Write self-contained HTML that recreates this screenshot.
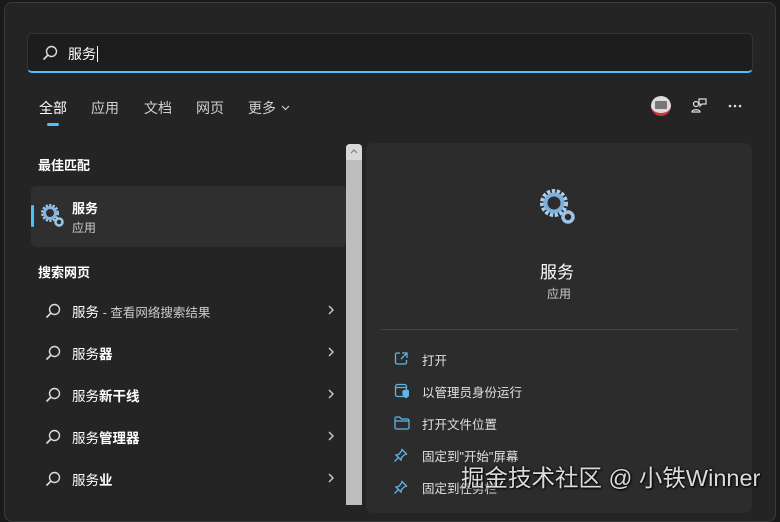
<!DOCTYPE html>
<html><head><meta charset="utf-8"><style>
*{margin:0;padding:0;box-sizing:border-box}
body{width:780px;height:505px;overflow:hidden;background:#1a1a1a;font-family:"Liberation Sans","Noto Sans CJK SC",sans-serif;color:#fff;position:relative}
.panel{position:absolute;left:4px;top:2px;width:772px;height:520px;background:#242424;border:1px solid #3a3a3a;border-radius:8px}
.abs{position:absolute}
.search{left:27px;top:33px;width:726px;height:40px;background:#1d1d1d;border:1px solid #333;border-radius:5px;border-bottom:2px solid #4cc2ff}
.tab{top:98px;font-size:14px;color:#d0d0d0}
.h{font-size:13px;font-weight:bold;color:#fff}
.row{left:30px;width:316px;height:40px}
.row .t{position:absolute;left:42px;top:10px;font-size:13.5px;color:#fff}
.row .c{position:absolute;left:298px;top:14px}
.act{left:422px;font-size:12.5px;color:#e0e0e0}
</style></head><body>
<div class="panel"></div>
<div class="abs search">
 <svg class="abs" style="left:14px;top:11px" width="16" height="16" viewBox="0 0 16 16"><circle cx="9.5" cy="6.5" r="5" fill="none" stroke="#ddd" stroke-width="1.4"/><path d="M6 10L1.5 14.5" stroke="#ddd" stroke-width="1.6"/></svg>
 <span class="abs" style="left:40px;top:10px;font-size:14px;color:#fff">服务<span style="border-left:1px solid #fff;margin-left:1px"></span></span>
</div>
<span class="abs tab" style="left:39px;color:#fff">全部</span>
<div class="abs" style="left:47px;top:123px;width:12px;height:3px;border-radius:2px;background:#4cc2ff"></div>
<span class="abs tab" style="left:91px">应用</span>
<span class="abs tab" style="left:144px">文档</span>
<span class="abs tab" style="left:196px">网页</span>
<span class="abs tab" style="left:248px">更多</span>
<svg class="abs" style="left:281px;top:105px" width="9" height="6" viewBox="0 0 9 6"><path d="M1 1l3.5 3.5L8 1" fill="none" stroke="#ccc" stroke-width="1.2"/></svg>
<div class="abs" style="left:651px;top:96px;width:20px;height:20px;border-radius:50%;background:#ddd;border-bottom:3px solid #c33"><div style="margin:5px 4px;height:8px;background:#777;border-radius:1px"></div></div>
<svg class="abs" style="left:690px;top:97px" width="18" height="18" viewBox="0 0 18 18" fill="none" stroke="#ddd" stroke-width="1.2"><circle cx="6" cy="7" r="2.5"/><path d="M2 15c0-3 8-3 8 0zM9 2h7v5h-4l-2 2V7H9z"/></svg>
<svg class="abs" style="left:728px;top:104px" width="14" height="4" viewBox="0 0 14 4" fill="#ddd"><circle cx="2" cy="2" r="1.3"/><circle cx="7" cy="2" r="1.3"/><circle cx="12" cy="2" r="1.3"/></svg>
<span class="abs h" style="left:38px;top:155px">最佳匹配</span>
<div class="abs" style="left:31px;top:186px;width:315px;height:61px;background:#2f2f2f;border-radius:5px"></div>
<div class="abs" style="left:31px;top:205px;width:3px;height:22px;background:#4cc2ff;border-radius:2px"></div>
<svg class="abs" style="left:40px;top:203px" width="26" height="26" viewBox="0 0 26 26"><circle cx="10" cy="10" r="7" fill="none" stroke="#9cc8ea" stroke-width="4" stroke-dasharray="2 1.2"/><circle cx="10" cy="10" r="5.5" fill="none" stroke="#8ab6de" stroke-width="3"/><circle cx="19" cy="19" r="3.5" fill="none" stroke="#9cc8ea" stroke-width="2.5"/></svg>
<span class="abs" style="left:72px;top:198px;font-size:13px;font-weight:bold">服务</span>
<span class="abs" style="left:72px;top:219px;font-size:12px;color:#ccc">应用</span>
<span class="abs h" style="left:38px;top:262px">搜索网页</span>
<div class="abs row" style="top:291px"><svg class="abs" style="left:15px;top:12px" width="16" height="16" viewBox="0 0 16 16"><circle cx="9.5" cy="6.5" r="5" fill="none" stroke="#ddd" stroke-width="1.4"/><path d="M6 10L1.5 14.5" stroke="#ddd" stroke-width="1.6"/></svg><span class="t">服务 <span style="color:#ccc;font-size:12.5px">- 查看网络搜索结果</span></span><svg class="c" width="6" height="10" viewBox="0 0 6 10"><path d="M1 1l4 4-4 4" fill="none" stroke="#ccc" stroke-width="1.4"/></svg></div>
<div class="abs row" style="top:333px"><svg class="abs" style="left:15px;top:12px" width="16" height="16" viewBox="0 0 16 16"><circle cx="9.5" cy="6.5" r="5" fill="none" stroke="#ddd" stroke-width="1.4"/><path d="M6 10L1.5 14.5" stroke="#ddd" stroke-width="1.6"/></svg><span class="t">服务<b>器</b></span><svg class="c" width="6" height="10" viewBox="0 0 6 10"><path d="M1 1l4 4-4 4" fill="none" stroke="#ccc" stroke-width="1.4"/></svg></div>
<div class="abs row" style="top:375px"><svg class="abs" style="left:15px;top:12px" width="16" height="16" viewBox="0 0 16 16"><circle cx="9.5" cy="6.5" r="5" fill="none" stroke="#ddd" stroke-width="1.4"/><path d="M6 10L1.5 14.5" stroke="#ddd" stroke-width="1.6"/></svg><span class="t">服务<b>新干线</b></span><svg class="c" width="6" height="10" viewBox="0 0 6 10"><path d="M1 1l4 4-4 4" fill="none" stroke="#ccc" stroke-width="1.4"/></svg></div>
<div class="abs row" style="top:417px"><svg class="abs" style="left:15px;top:12px" width="16" height="16" viewBox="0 0 16 16"><circle cx="9.5" cy="6.5" r="5" fill="none" stroke="#ddd" stroke-width="1.4"/><path d="M6 10L1.5 14.5" stroke="#ddd" stroke-width="1.6"/></svg><span class="t">服务<b>管理器</b></span><svg class="c" width="6" height="10" viewBox="0 0 6 10"><path d="M1 1l4 4-4 4" fill="none" stroke="#ccc" stroke-width="1.4"/></svg></div>
<div class="abs row" style="top:459px"><svg class="abs" style="left:15px;top:12px" width="16" height="16" viewBox="0 0 16 16"><circle cx="9.5" cy="6.5" r="5" fill="none" stroke="#ddd" stroke-width="1.4"/><path d="M6 10L1.5 14.5" stroke="#ddd" stroke-width="1.6"/></svg><span class="t">服务<b>业</b></span><svg class="c" width="6" height="10" viewBox="0 0 6 10"><path d="M1 1l4 4-4 4" fill="none" stroke="#ccc" stroke-width="1.4"/></svg></div>
<div class="abs" style="left:346px;top:144px;width:16px;height:361px;background:#bdbdbd;border-radius:4px 4px 0 0"></div>
<div class="abs" style="left:346px;top:144px;width:16px;height:16px;background:#d8d8d8;border-radius:4px 4px 0 0"></div>
<svg class="abs" style="left:350px;top:149px" width="8" height="5" viewBox="0 0 8 5"><path d="M1 4l3-3 3 3" fill="none" stroke="#777" stroke-width="1"/></svg>
<div class="abs" style="left:366px;top:143px;width:386px;height:370px;background:#2c2c2c;border-radius:8px"></div>
<svg class="abs" style="left:537px;top:186px" width="44" height="44" viewBox="0 0 44 44"><circle cx="17" cy="17" r="11" fill="none" stroke="#a8d0ee" stroke-width="6" stroke-dasharray="3 1.5"/><circle cx="17" cy="17" r="8.5" fill="none" stroke="#7fb0dc" stroke-width="4"/><circle cx="31" cy="31" r="5" fill="none" stroke="#9cc4e6" stroke-width="3.5"/></svg>
<span class="abs" style="left:540px;top:258px;font-size:17px">服务</span>
<span class="abs" style="left:547px;top:285px;font-size:12px;color:#ccc">应用</span>
<div class="abs" style="left:381px;top:329px;width:357px;height:1px;background:#444"></div>
<svg class="abs" style="left:394px;top:351px" width="15" height="15" viewBox="0 0 15 15" fill="none" stroke="#5fb4e6" stroke-width="1.3"><path d="M6 2H3a1.5 1.5 0 0 0-1.5 1.5v8A1.5 1.5 0 0 0 3 13h8a1.5 1.5 0 0 0 1.5-1.5V9M8 2h5v5M13 2L7 8"/></svg>
<span class="abs act" style="top:350px">打开</span>
<svg class="abs" style="left:394px;top:383px" width="15" height="16" viewBox="0 0 15 16" fill="none" stroke="#5fb4e6" stroke-width="1.3"><rect x="1.5" y="1.5" width="11" height="12" rx="2"/><path d="M1.5 4.5h11"/><path d="M9 8l3-1 3 1v3c0 2-3 3.5-3 3.5S9 13 9 11z" fill="#5fb4e6"/></svg>
<span class="abs act" style="top:382px">以管理员身份运行</span>
<svg class="abs" style="left:394px;top:416px" width="16" height="14" viewBox="0 0 16 14" fill="none" stroke="#5fb4e6" stroke-width="1.3"><path d="M1 2.5a1.5 1.5 0 0 1 1.5-1.5h3l2 2h6a1.5 1.5 0 0 1 1.5 1.5v7a1.5 1.5 0 0 1-1.5 1.5h-11A1.5 1.5 0 0 1 1 11.5zM1 5h14"/></svg>
<span class="abs act" style="top:414px">打开文件位置</span>
<svg class="abs" style="left:393px;top:448px" width="15" height="15" viewBox="0 0 15 15" fill="none" stroke="#5fb4e6" stroke-width="1.3"><path d="M9 1.5l4.5 4.5-2.5 1-2.5 2.5-.5 2.5-5-5 2.5-.5L8 4z M5 10L1.5 13.5"/></svg>
<span class="abs act" style="top:446px">固定到"开始"屏幕</span>
<svg class="abs" style="left:393px;top:480px" width="15" height="15" viewBox="0 0 15 15" fill="none" stroke="#5fb4e6" stroke-width="1.3"><path d="M9 1.5l4.5 4.5-2.5 1-2.5 2.5-.5 2.5-5-5 2.5-.5L8 4z M5 10L1.5 13.5"/></svg>
<span class="abs act" style="top:478px">固定到任务栏</span>
<span class="abs" style="left:461px;top:459px;font-size:23.5px;color:rgba(255,255,255,0.85);text-shadow:0 0 2px #000,1px 1px 2px #000">掘金技术社区 @ 小铁Winner</span>
</body></html>
